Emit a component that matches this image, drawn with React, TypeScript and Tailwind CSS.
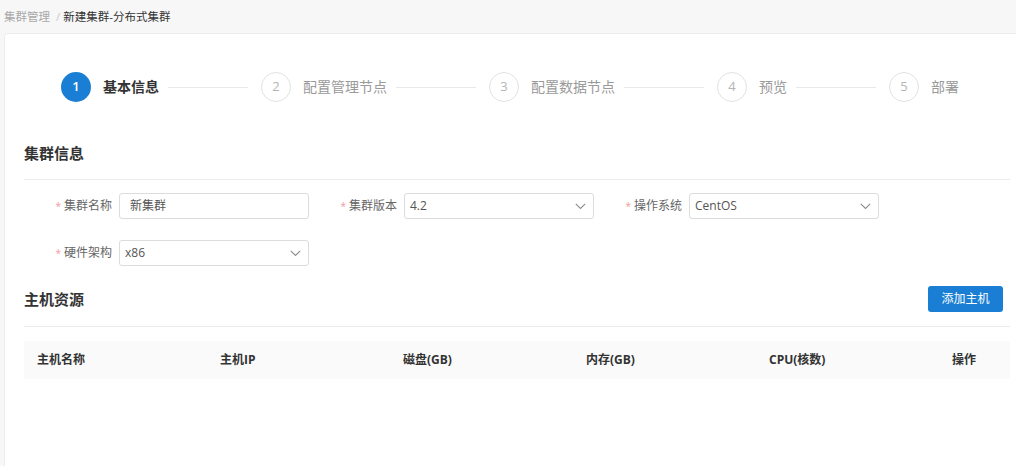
import React from "react";

const FONT = { fontFamily: '"Open Sans", "Noto Sans CJK SC", sans-serif' };

function Chevron() {
  return (
    <svg width="11" height="7" viewBox="0 0 11 7" fill="none" className="shrink-0">
      <path d="M0.8 0.8 L5.5 5.5 L10.2 0.8" stroke="#8c8c8c" strokeWidth="1.1" />
    </svg>
  );
}

function Step({ n, label, active, last }: { n: number; label: string; active?: boolean; last?: boolean }) {
  return (
    <div className="flex items-center">
      {active ? (
        <div className="w-[30px] h-[30px] rounded-full bg-[#1a7fd4] text-white text-[13px] font-semibold flex items-center justify-center shrink-0">
          {n}
        </div>
      ) : (
        <div className="w-[30px] h-[30px] rounded-full border border-[#e2e2e2] text-[#b5b5b5] text-[13px] flex items-center justify-center shrink-0 box-border">
          {n}
        </div>
      )}
      <span
        className={
          "ml-[12px] text-[14px] leading-[20px] whitespace-nowrap " +
          (active ? "font-bold text-[#333]" : "text-[#9a9a9a]")
        }
      >
        {label}
      </span>
      {!last && <div className="ml-[9px] mr-[13px] w-[80px] h-px bg-[#e8e8e8]" />}
    </div>
  );
}

function Field({ label, value, select, inputPl }: { label: string; value: string; select?: boolean; inputPl?: string }) {
  return (
    <div className="flex items-center w-[285px] shrink-0">
      <div className="w-[95px] flex justify-end items-center pr-[7px] text-[12px] text-[#666] whitespace-nowrap">
        <span className="text-[#f29b9b] text-[10px] mr-[3px] leading-none">*</span>
        <span>{label}</span>
      </div>
      <div
        className={
          "w-[190px] h-[26px] border border-[#dcdcdc] rounded-[3px] bg-white flex items-center justify-between pr-[7px] text-[12px] text-[#555] " +
          (inputPl ?? "pl-[5px]")
        }
      >
        <span>{value}</span>
        {select && <Chevron />}
      </div>
    </div>
  );
}

export default function App() {
  const cols = ["主机名称", "主机IP", "磁盘(GB)", "内存(GB)", "CPU(核数)"];
  return (
    <div className="w-[1016px] h-[466px] bg-[#f7f7f7] overflow-hidden" style={FONT}>
      <div className="h-[33px] flex items-center pl-[4px] text-[11.5px]">
        <span className="text-[#a8a8a8]">集群管理</span>
        <span className="text-[#c8c8c8] ml-[6px] mr-[3px]">/</span>
        <span className="text-[#333]">新建集群-分布式集群</span>
      </div>
      <div className="ml-[4px] h-[433px] bg-white border-l border-t border-[#ececec] rounded-tl-[4px] pl-[19px] pr-[6px] pt-[38px]">
        <div className="flex items-center h-[30px] pl-[37px]">
          <Step n={1} label="基本信息" active />
          <Step n={2} label="配置管理节点" />
          <Step n={3} label="配置数据节点" />
          <Step n={4} label="预览" />
          <Step n={5} label="部署" last />
        </div>

        <div className="mt-[39px] h-[24px] leading-[24px] text-[15px] font-bold text-[#333]">集群信息</div>
        <div className="mt-[14px] border-b border-[#ebebeb]" />

        <div className="mt-[13px] flex">
          <Field label="集群名称" value="新集群" inputPl="pl-[10px]" />
          <Field label="集群版本" value="4.2" select />
          <Field label="操作系统" value="CentOS" select />
        </div>
        <div className="mt-[21px] flex">
          <Field label="硬件架构" value="x86" select />
        </div>

        <div className="mt-[20px] h-[26px] flex items-center justify-between">
          <span className="text-[15px] font-bold text-[#333]">主机资源</span>
          <button className="mr-[7px] w-[75px] h-[26px] bg-[#1a7fd4] rounded-[3px] text-white text-[12px]">添加主机</button>
        </div>
        <div className="mt-[14px] border-b border-[#ebebeb]" />

        <div className="mt-[14px] h-[38px] bg-[#fafafa] flex items-center text-[12px] font-bold text-[#333]">
          {cols.map((c) => (
            <div key={c} className="w-[183px] pl-[13px] shrink-0 whitespace-nowrap">
              {c}
            </div>
          ))}
          <div className="pl-[13px] whitespace-nowrap">操作</div>
        </div>
      </div>
    </div>
  );
}
